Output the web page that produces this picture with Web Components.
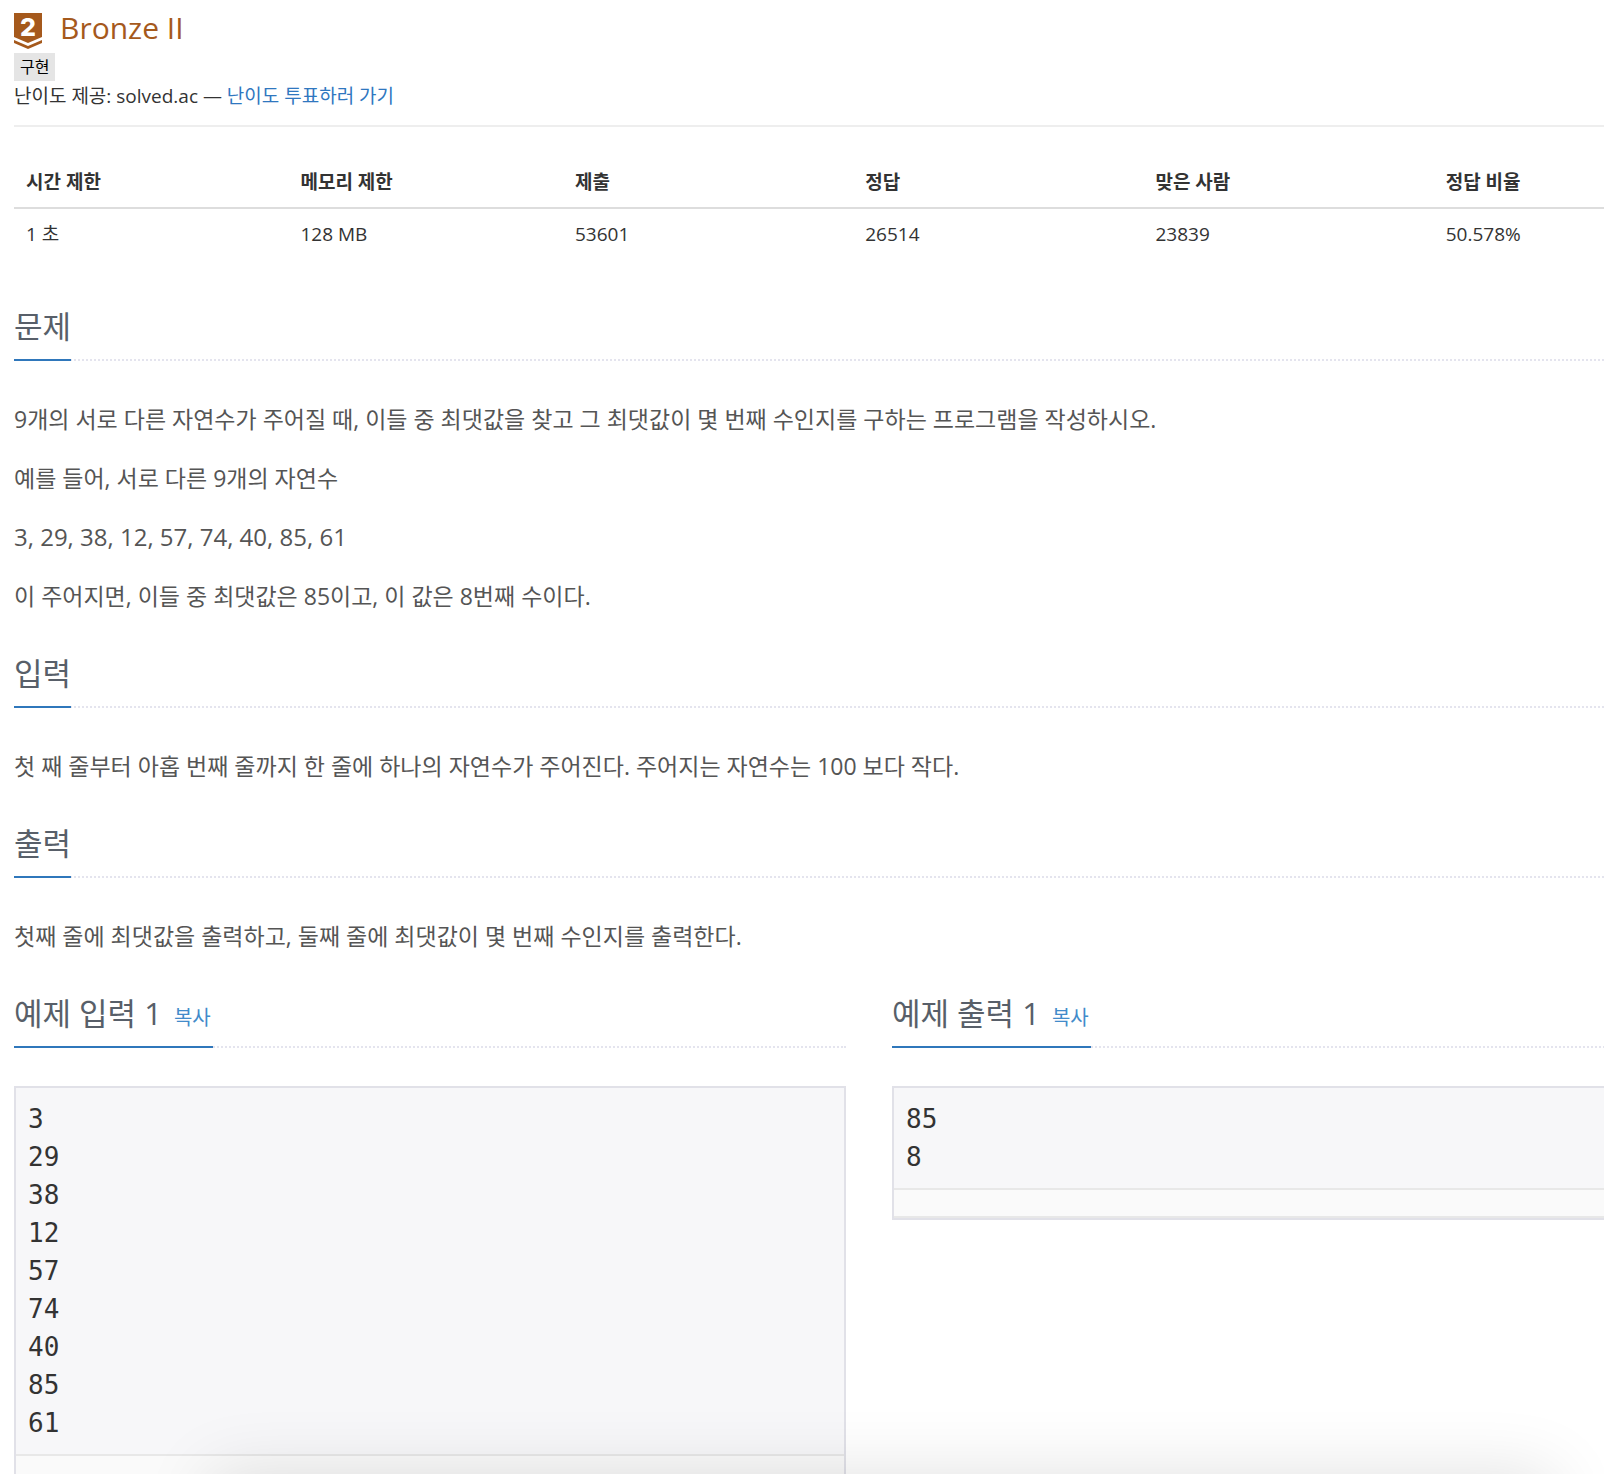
<!DOCTYPE html>
<html lang="ko">
<head>
<meta charset="utf-8">
<title>최댓값</title>
<style>
    html, body {
        margin: 0;
        height: 100%;
        overflow: hidden;
    }
    body {
        background: white;
        color: #333;
        font: 19px/28px "Open Sans", "Noto Sans CJK KR", sans-serif;
    }
    .numbers {
        font-size: 24px;
    }
</style>
</head>
<body>
<problem-page>
    <tier-header slot="header" tier="Bronze II" level="2" tag="구현"></tier-header>
    <problem-info slot="header"></problem-info>
    <problem-section heading="문제">
        <p>9개의 서로 다른 자연수가 주어질 때, 이들 중 최댓값을 찾고 그 최댓값이 몇 번째 수인지를 구하는 프로그램을 작성하시오.</p>
        <p>예를 들어, 서로 다른 9개의 자연수</p>
        <p class="numbers">3, 29, 38, 12, 57, 74, 40, 85, 61</p>
        <p>이 주어지면, 이들 중 최댓값은 85이고, 이 값은 8번째 수이다.</p>
    </problem-section>
    <problem-section heading="입력">
        <p>첫 째 줄부터 아홉 번째 줄까지 한 줄에 하나의 자연수가 주어진다. 주어지는 자연수는 100 보다 작다.</p>
    </problem-section>
    <problem-section heading="출력">
        <p>첫째 줄에 최댓값을 출력하고, 둘째 줄에 최댓값이 몇 번째 수인지를 출력한다.</p>
    </problem-section>
    <sample-data slot="samples" heading="예제 입력 1">3
29
38
12
57
74
40
85
61</sample-data>
    <sample-data slot="samples" heading="예제 출력 1">85
8</sample-data>
</problem-page>
<window-shadow></window-shadow>

<script>
class ProblemPage extends HTMLElement {

    constructor() {
        super();
        this.shadowDOM = this.attachShadow({ mode: "open" });
        this.shadowDOM.innerHTML = `
            <style>
                :host {
                    display: block;
                    /* the page is wider than the window and runs off its right edge */
                    margin: 0 -120px 0 14px;
                    padding-top: 8px;
                }
                .samples {
                    display: grid;
                    grid-template-columns: 1fr 1fr;
                    align-items: start;
                    column-gap: 46px;
                }
            </style>
            <header><slot name="header"></slot></header>
            <main>
                <slot></slot>
                <div class="samples"><slot name="samples"></slot></div>
            </main>`;
    }
}

class TierHeader extends HTMLElement {

    constructor() {
        super();
        this.shadowDOM = this.attachShadow({ mode: "open" });
    }

    connectedCallback() {
        this.shadowDOM.innerHTML = `
            <style>
                :host {
                    display: block;
                    border-bottom: 2px solid #eee;
                    margin-bottom: 28px;
                    padding-bottom: 15px;
                }
                .tier {
                    display: flex;
                    align-items: center;
                    gap: 18px;
                    height: 45px;
                    color: #a5591c;
                    font-size: 30px;
                    line-height: 40px;
                }
                .tier > svg {
                    width: 28px;
                    height: 36px;
                }
                .tier > span {
                    padding-bottom: 6px;
                }
                .tag {
                    display: block;
                    width: fit-content;
                    padding: 0 6px;
                    background: #e5e5e5;
                    color: black;
                    font-size: 16px;
                    text-decoration: none;
                }
                p {
                    margin: 1px 0 0;
                }
                p > a {
                    color: #2f77bf;
                    text-decoration: none;
                }
            </style>
            <div class="tier">
                <svg viewBox="0 0 28 36" aria-hidden="true">
                    <path fill="#a5591c" d="M0 0h28v24l-14 6l-14-6z"/>
                    <path fill="#a5591c" d="M0 27l14 6l14-6v3l-14 6l-14-6z"/>
                    <text x="14" y="23" text-anchor="middle" fill="white" font-family="Inter" font-size="25" font-weight="800">${this.getAttribute("level")}</text>
                </svg>
                <span>${this.getAttribute("tier")}</span>
            </div>
            <a class="tag" href="#tag">${this.getAttribute("tag")}</a>
            <p>난이도 제공: solved.ac — <a href="#vote">난이도 투표하러 가기</a></p>`;
    }
}

class ProblemInfo extends HTMLElement {

    constructor() {
        super();
        this.shadowDOM = this.attachShadow({ mode: "open" });
        this.shadowDOM.innerHTML = `
            <style>
                :host {
                    display: block;
                    margin-bottom: 46px;
                }
                table {
                    width: 100%;
                    table-layout: fixed;
                    border-collapse: collapse;
                }
                th, td {
                    width: 17%;
                    padding: 13px 12px 11px;
                    text-align: left;
                }
                th:nth-child(-n+2) {
                    width: 16%;
                }
                th {
                    border-bottom: 2px solid #ddd;
                }
                td {
                    padding: 11px 12px 10px;
                }
            </style>
            <table>
                <thead>
                    <tr><th>시간 제한</th><th>메모리 제한</th><th>제출</th><th>정답</th><th>맞은 사람</th><th>정답 비율</th></tr>
                </thead>
                <tbody>
                    <tr><td>1 초</td><td>128 MB</td><td>53601</td><td>26514</td><td>23839</td><td>50.578%</td></tr>
                </tbody>
            </table>`;
    }
}

// heading shared by the text sections and the samples
const headingStyle = `
    h2 {
        display: flex;
        margin: 0;
        border-bottom: 2px dotted #e4e4ee;
        color: #585f69;
        font-size: 31px;
        font-weight: 400;
        line-height: 44px;
    }
    h2 > span {
        padding-bottom: 11px;
        margin-bottom: -2px;
        border-bottom: 2px solid #2f77bb;
    }`;

class ProblemSection extends HTMLElement {

    constructor() {
        super();
        this.shadowDOM = this.attachShadow({ mode: "open" });
    }

    connectedCallback() {
        this.shadowDOM.innerHTML = `
            <style>
                ${headingStyle}
                :host {
                    display: block;
                    margin-bottom: 37px;
                }
                .text {
                    display: grid;
                    gap: 23px;
                    margin-top: 40px;
                    color: #555;
                    font-size: 23px;
                    line-height: 36px;
                }
                ::slotted(p) {
                    margin: 0;
                }
            </style>
            <h2><span>${this.getAttribute("heading")}</span></h2>
            <div class="text"><slot></slot></div>`;
    }
}

class SampleData extends HTMLElement {

    constructor() {
        super();
        this.shadowDOM = this.attachShadow({ mode: "open" });
    }

    connectedCallback() {
        this.shadowDOM.innerHTML = `
            <style>
                ${headingStyle}
                :host {
                    display: block;
                }
                button {
                    margin: 0 0 0 2px;
                    padding: 0 2px;
                    border: 0;
                    background: none;
                    color: #428bca;
                    font: inherit;
                    font-size: 20px;
                    line-height: 28px;
                    cursor: pointer;
                }
                .box {
                    margin-top: 38px;
                    border: 2px solid #e1e1e8;
                    background: #f7f7f9;
                }
                pre {
                    margin: 0;
                    padding: 12px;
                    font: 26px/38px "DejaVu Sans Mono", monospace;
                }
                .foot {
                    height: 26px;
                    border: solid #e8e8e8;
                    border-width: 2px 0;
                    background: #fafafa;
                }
            </style>
            <h2><span>${this.getAttribute("heading")} <button type="button">복사</button></span></h2>
            <div class="box">
                <pre><slot></slot></pre>
                <div class="foot"></div>
            </div>`;
    }

}

class WindowShadow extends HTMLElement {

    constructor() {
        super();
        this.shadowDOM = this.attachShadow({ mode: "open" });
        this.shadowDOM.innerHTML = `
            <style>
                :host {
                    position: fixed;
                    top: 100%;
                    right: 50px;
                    left: 210px;
                    height: 200px;
                    box-shadow: 0 0 70px rgba(0, 0, 0, 0.12);
                    pointer-events: none;
                }
            </style>`;
    }
}

customElements.define("problem-page", ProblemPage);
customElements.define("tier-header", TierHeader);
customElements.define("problem-info", ProblemInfo);
customElements.define("problem-section", ProblemSection);
customElements.define("sample-data", SampleData);
customElements.define("window-shadow", WindowShadow);
</script>
</body>
</html>
